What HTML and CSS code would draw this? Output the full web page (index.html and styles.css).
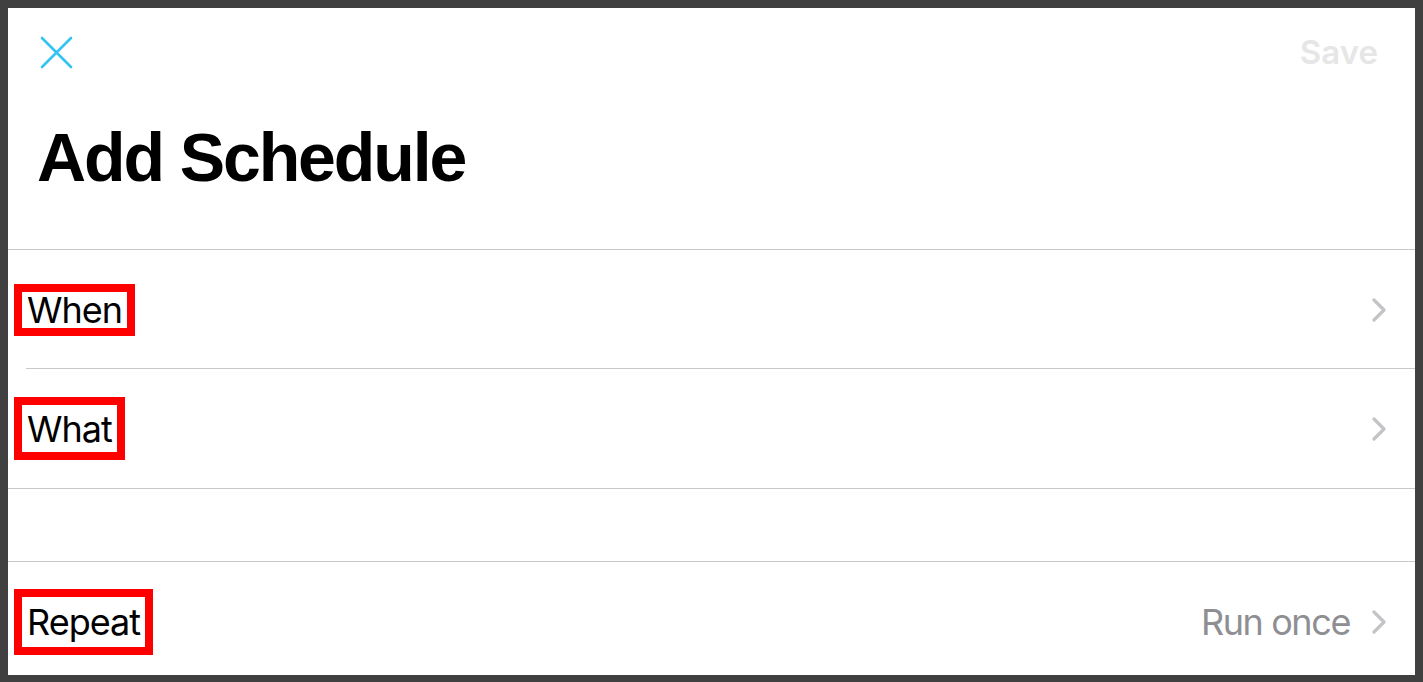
FILE: index.html
```html
<!DOCTYPE html>
<html>
  <head>
    <meta charset="utf-8">
    <meta name="viewport" content="width=device-width, initial-scale=1">
    <title>Add Schedule</title>
    <link rel="stylesheet" href="styles.css">
  </head>
  <body>

    <div class="panel">
      <div class="topbar">
	<button class="close" type="button" aria-label="Close">
	  <svg width="33" height="33" viewBox="0 0 33 33">
	    <path d="M2 2 L31 31 M31 2 L2 31" stroke="#34c3f2" stroke-width="2.6" stroke-linecap="round" fill="none"/>
	  </svg>
	</button>
	<span class="save">Save</span>
      </div>

      <h1>Add Schedule</h1>

      <div class="group">
	<div class="row inset">
	  <span class="label">When</span>
	  <svg class="chevron" width="14" height="24" viewBox="0 0 14 24"><path d="M2 2 L12 12 L2 22"/></svg>
	</div>
	<div class="row">
	  <span class="label label-mid">What</span>
	  <svg class="chevron" width="14" height="24" viewBox="0 0 14 24"><path d="M2 2 L12 12 L2 22"/></svg>
	</div>
      </div>

      <div class="group">
	<div class="row">
	  <span class="label label-tall">Repeat</span>
	  <span class="value">Run once</span>
	  <svg class="chevron" width="14" height="24" viewBox="0 0 14 24"><path d="M2 2 L12 12 L2 22"/></svg>
	</div>
      </div>
    </div>

  </body>
</html>
```

FILE: styles.css
```css
      body {
	  margin: 0;
	  background: #404040;
	  font-family: Inter, "Liberation Sans", sans-serif;
      }

      .panel {
	  margin: 8px 8px 7px 8px;
	  height: 667px;
	  background: white;
	  overflow: hidden;
      }

      .topbar {
	  display: flex;
	  align-items: center;
	  justify-content: space-between;
	  padding: 28px 37px 0 32px;
	  height: 33px;
      }

      .close {
	  border: none;
	  background: transparent;
	  padding: 0;
	  width: 33px;
	  height: 33px;
	  cursor: pointer;
      }

      .close svg {
	  display: block;
      }

      .save {
	  color: #e6e6e6;
	  font-weight: 600;
	  font-size: 33px;
	  line-height: 33px;
      }

      h1 {
	  margin: 0;
	  padding: 54px 0 0 29px;
	  height: 126px;
	  box-sizing: content-box;
	  font-family: "Liberation Sans", sans-serif;
	  font-weight: bold;
	  font-size: 68px;
	  line-height: 68px;
	  letter-spacing: -2.1px;
	  color: black;
      }

      .group {
	  border-top: 1px solid #c8c8c8;
	  border-bottom: 1px solid #c8c8c8;
	  margin-bottom: 72px;
      }

      .group + .group {
	  border-bottom: none;
      }

      .row {
	  display: flex;
	  align-items: center;
	  height: 119px;
	  padding: 0 29px 0 6px;
	  position: relative;
      }

      .row.inset::after {
	  position: absolute;
	  content: "";
	  left: 18px;
	  right: 0;
	  bottom: 0;
	  border-bottom: 1px solid #c8c8c8;
      }

      .label {
	  border: 8px solid #ff0000;
	  padding: 0 5px 0 5px;
	  font-size: 36px;
	  line-height: 36px;
	  letter-spacing: -1px;
	  color: black;
      }

      .label-mid {
	  padding-top: 6px;
	  padding-bottom: 5px;
      }

      .label-tall {
	  padding-top: 7px;
	  padding-bottom: 7px;
      }

      .value {
	  margin-left: auto;
	  margin-right: 22px;
	  font-size: 36px;
	  letter-spacing: -1.4px;
	  color: #8e8e93;
      }

      .chevron {
	  margin-left: auto;
	  flex: none;
      }

      .chevron path {
	  stroke: #c4c4c8;
	  stroke-width: 3.2;
	  stroke-linecap: round;
	  stroke-linejoin: round;
	  fill: none;
      }

      .value + .chevron {
	  margin-left: 0;
      }
```
